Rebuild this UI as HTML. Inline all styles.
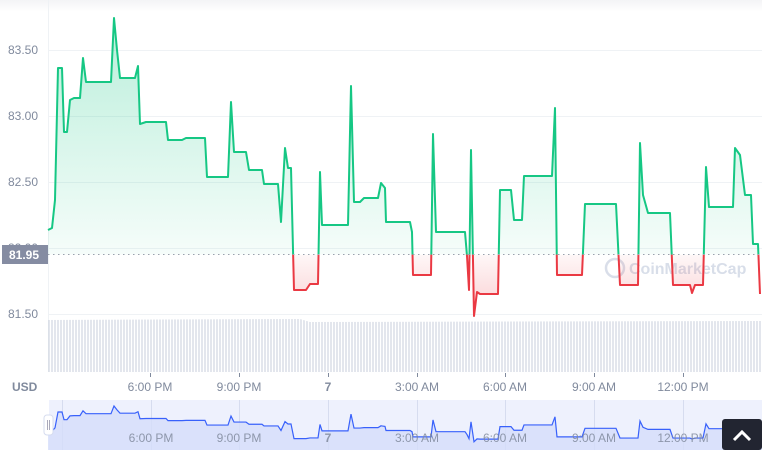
<!DOCTYPE html>
<html><head><meta charset="utf-8"><style>
html,body{margin:0;padding:0;background:#fff;width:762px;height:450px;overflow:hidden;font-family:"Liberation Sans",Arial,sans-serif}
</style></head><body>
<svg width="762" height="450" viewBox="0 0 762 450" xmlns="http://www.w3.org/2000/svg" style="position:absolute;left:0;top:0">
<defs>
<linearGradient id="top" x1="0" y1="0" x2="0" y2="1"><stop offset="0" stop-color="#f3f4f6"/><stop offset="1" stop-color="#fff"/></linearGradient>
<linearGradient id="g" x1="0" y1="18" x2="0" y2="255" gradientUnits="userSpaceOnUse"><stop offset="0" stop-color="#16c784" stop-opacity="0.3"/><stop offset="1" stop-color="#16c784" stop-opacity="0.04"/></linearGradient>
<linearGradient id="r" x1="0" y1="255" x2="0" y2="316" gradientUnits="userSpaceOnUse"><stop offset="0" stop-color="#ea3943" stop-opacity="0.04"/><stop offset="1" stop-color="#ea3943" stop-opacity="0.25"/></linearGradient>
<clipPath id="ca"><rect x="0" y="0" width="762" height="254.6"/></clipPath>
<clipPath id="cb"><rect x="0" y="254.6" width="762" height="200"/></clipPath>
<pattern id="bars" x="48" y="0" width="3" height="450" patternUnits="userSpaceOnUse"><rect x="0.5" y="0" width="1" height="450" fill="#c7cedb"/></pattern>
</defs>
<rect x="0" y="0" width="762" height="12" fill="url(#top)"/>
<g stroke="#eff2f5" stroke-width="1">
<line x1="48" y1="50.5" x2="762" y2="50.5"/><line x1="48" y1="116.5" x2="762" y2="116.5"/><line x1="48" y1="182.5" x2="762" y2="182.5"/><line x1="48" y1="248.5" x2="762" y2="248.5"/><line x1="48" y1="314.5" x2="762" y2="314.5"/>
<line x1="48.5" y1="0" x2="48.5" y2="372"/>
</g>
<g fill="#808a9d" font-size="12">
<text x="8" y="54">83.50</text><text x="8" y="120">83.00</text><text x="8" y="186">82.50</text><text x="8" y="252">82.00</text><text x="8" y="318">81.50</text>
</g>
<path d="M48 320 L300 319 L310 322 L762 321 L762 372 L48 372Z" fill="url(#bars)"/>
<circle cx="615" cy="268" r="9" fill="none" stroke="#cfd6e4" stroke-width="2.5" opacity="0.8"/>
<text x="629" y="274" font-size="16" font-weight="bold" fill="#cfd6e4" opacity="0.8">CoinMarketCap</text>
<g>
<polygon clip-path="url(#ca)" fill="url(#g)" points="48,254.6 48,230 52,228 55,200 58,68 62,68 64,132 67,132 70,100 74,98 80,98 83,58 86,82 111,82 114,18 117,50 120,78 135,78 138,66 140,124 146,122 166,122 168,140 182,140 186,138 205,138 207,177 228,177 231,102 234,152 246,152 249,170 262,170 264,184 278,184 281,222 285,148 288,168 291,168 294,290 306,290 310,284 318,284 320,172 322,225 348,225 351,86 354,202 360,202 364,198 378,198 381,183 385,188 386,222 410,222 412,232 413,275 431,275 433,134 436,232 465,232 467,256 469,290 471,150 474,316 477,292 480,294 498,294 500,190 511,190 514,220 522,220 524,176 552,176 555,108 557,275 582,275 585,204 616,204 620,285 638,285 640,143 643,195 648,213 670,213 673,285 690,285 692,293 695,285 703,285 706,167 709,207 733,207 735,148 740,155 745,195 751,195 753,244 758,244 760,294 760,254.6"/>
<polygon clip-path="url(#cb)" fill="url(#r)" points="48,254.6 48,230 52,228 55,200 58,68 62,68 64,132 67,132 70,100 74,98 80,98 83,58 86,82 111,82 114,18 117,50 120,78 135,78 138,66 140,124 146,122 166,122 168,140 182,140 186,138 205,138 207,177 228,177 231,102 234,152 246,152 249,170 262,170 264,184 278,184 281,222 285,148 288,168 291,168 294,290 306,290 310,284 318,284 320,172 322,225 348,225 351,86 354,202 360,202 364,198 378,198 381,183 385,188 386,222 410,222 412,232 413,275 431,275 433,134 436,232 465,232 467,256 469,290 471,150 474,316 477,292 480,294 498,294 500,190 511,190 514,220 522,220 524,176 552,176 555,108 557,275 582,275 585,204 616,204 620,285 638,285 640,143 643,195 648,213 670,213 673,285 690,285 692,293 695,285 703,285 706,167 709,207 733,207 735,148 740,155 745,195 751,195 753,244 758,244 760,294 760,254.6"/>
</g>
<polyline fill="none" stroke-width="2" stroke-linejoin="round" points="48,230 52,228 55,200 58,68 62,68 64,132 67,132 70,100 74,98 80,98 83,58 86,82 111,82 114,18 117,50 120,78 135,78 138,66 140,124 146,122 166,122 168,140 182,140 186,138 205,138 207,177 228,177 231,102 234,152 246,152 249,170 262,170 264,184 278,184 281,222 285,148 288,168 291,168 294,290 306,290 310,284 318,284 320,172 322,225 348,225 351,86 354,202 360,202 364,198 378,198 381,183 385,188 386,222 410,222 412,232 413,275 431,275 433,134 436,232 465,232 467,256 469,290 471,150 474,316 477,292 480,294 498,294 500,190 511,190 514,220 522,220 524,176 552,176 555,108 557,275 582,275 585,204 616,204 620,285 638,285 640,143 643,195 648,213 670,213 673,285 690,285 692,293 695,285 703,285 706,167 709,207 733,207 735,148 740,155 745,195 751,195 753,244 758,244 760,294" stroke="#16c784" clip-path="url(#ca)"/>
<polyline fill="none" stroke="#ea3943" stroke-width="2" stroke-linejoin="round" clip-path="url(#cb)" points="48,230 52,228 55,200 58,68 62,68 64,132 67,132 70,100 74,98 80,98 83,58 86,82 111,82 114,18 117,50 120,78 135,78 138,66 140,124 146,122 166,122 168,140 182,140 186,138 205,138 207,177 228,177 231,102 234,152 246,152 249,170 262,170 264,184 278,184 281,222 285,148 288,168 291,168 294,290 306,290 310,284 318,284 320,172 322,225 348,225 351,86 354,202 360,202 364,198 378,198 381,183 385,188 386,222 410,222 412,232 413,275 431,275 433,134 436,232 465,232 467,256 469,290 471,150 474,316 477,292 480,294 498,294 500,190 511,190 514,220 522,220 524,176 552,176 555,108 557,275 582,275 585,204 616,204 620,285 638,285 640,143 643,195 648,213 670,213 673,285 690,285 692,293 695,285 703,285 706,167 709,207 733,207 735,148 740,155 745,195 751,195 753,244 758,244 760,294"/>
<line x1="48" y1="254.5" x2="762" y2="254.5" stroke="#9aa1ad" stroke-width="1" stroke-dasharray="1.5 3.5"/>
<rect x="2" y="245" width="46" height="19" fill="#858ca2"/>
<text x="9" y="259" font-size="12" fill="#fff" font-weight="bold">81.95</text>
<g stroke="#808a9d"><line x1="150.5" y1="373" x2="150.5" y2="377"/><line x1="239.5" y1="373" x2="239.5" y2="377"/><line x1="328.5" y1="373" x2="328.5" y2="377"/><line x1="417.5" y1="373" x2="417.5" y2="377"/><line x1="505.5" y1="373" x2="505.5" y2="377"/><line x1="594.5" y1="373" x2="594.5" y2="377"/><line x1="683.5" y1="373" x2="683.5" y2="377"/></g>
<g fill="#808a9d" font-size="12" text-anchor="middle">
<text x="150" y="391">6:00 PM</text><text x="239" y="391">9:00 PM</text><text x="328" y="391" font-weight="bold">7</text><text x="417" y="391">3:00 AM</text><text x="505" y="391">6:00 AM</text><text x="594" y="391">9:00 AM</text><text x="683" y="391">12:00 PM</text>
</g>
<text x="12" y="391" font-size="12" font-weight="bold" fill="#808a9d">USD</text>
<rect x="49" y="400" width="713" height="50" fill="#eef1fd"/>
<g stroke="#d6dcef"><line x1="62.5" y1="400" x2="62.5" y2="450"/><line x1="151.5" y1="400" x2="151.5" y2="450"/><line x1="239.5" y1="400" x2="239.5" y2="450"/><line x1="328.5" y1="400" x2="328.5" y2="450"/><line x1="417.5" y1="400" x2="417.5" y2="450"/><line x1="505.5" y1="400" x2="505.5" y2="450"/><line x1="594.5" y1="400" x2="594.5" y2="450"/><line x1="683.5" y1="400" x2="683.5" y2="450"/></g>
<g transform="translate(0,406) scale(1,0.12) translate(0,-18)">
<polygon fill="#d4ddfa" opacity="0.8" points="48,420 48,230 52,228 55,200 58,68 62,68 64,132 67,132 70,100 74,98 80,98 83,58 86,82 111,82 114,18 117,50 120,78 135,78 138,66 140,124 146,122 166,122 168,140 182,140 186,138 205,138 207,177 228,177 231,102 234,152 246,152 249,170 262,170 264,184 278,184 281,222 285,148 288,168 291,168 294,290 306,290 310,284 318,284 320,172 322,225 348,225 351,86 354,202 360,202 364,198 378,198 381,183 385,188 386,222 410,222 412,232 413,275 431,275 433,134 436,232 465,232 467,256 469,290 471,150 474,316 477,292 480,294 498,294 500,190 511,190 514,220 522,220 524,176 552,176 555,108 557,275 582,275 585,204 616,204 620,285 638,285 640,143 643,195 648,213 670,213 673,285 690,285 692,293 695,285 703,285 706,167 709,207 733,207 735,148 740,155 745,195 751,195 753,244 758,244 760,294 762,294 762,420"/>
<polyline fill="none" stroke="#3861fb" stroke-width="1.2" vector-effect="non-scaling-stroke" points="48,230 52,228 55,200 58,68 62,68 64,132 67,132 70,100 74,98 80,98 83,58 86,82 111,82 114,18 117,50 120,78 135,78 138,66 140,124 146,122 166,122 168,140 182,140 186,138 205,138 207,177 228,177 231,102 234,152 246,152 249,170 262,170 264,184 278,184 281,222 285,148 288,168 291,168 294,290 306,290 310,284 318,284 320,172 322,225 348,225 351,86 354,202 360,202 364,198 378,198 381,183 385,188 386,222 410,222 412,232 413,275 431,275 433,134 436,232 465,232 467,256 469,290 471,150 474,316 477,292 480,294 498,294 500,190 511,190 514,220 522,220 524,176 552,176 555,108 557,275 582,275 585,204 616,204 620,285 638,285 640,143 643,195 648,213 670,213 673,285 690,285 692,293 695,285 703,285 706,167 709,207 733,207 735,148 740,155 745,195 751,195 753,244 758,244 760,294"/>
</g>
<g fill="#808a9d" font-size="12" text-anchor="middle" opacity="0.85">
<text x="151" y="442">6:00 PM</text><text x="239" y="442">9:00 PM</text><text x="328" y="442" font-weight="bold">7</text><text x="417" y="442">3:00 AM</text><text x="505" y="442">6:00 AM</text><text x="594" y="442">9:00 AM</text><text x="683" y="442">12:00 PM</text>
</g>
<rect x="44" y="415" width="9" height="20" rx="3" fill="#fff" stroke="#d6dcef"/>
<line x1="47.5" y1="420" x2="47.5" y2="430" stroke="#aab"/><line x1="49.5" y1="420" x2="49.5" y2="430" stroke="#aab"/>
<rect x="722" y="419" width="40" height="31" rx="3" fill="#222531"/>
<path d="M734 440 L742 432 L750 440" fill="none" stroke="#fff" stroke-width="3"/>
</svg>
</body></html>
